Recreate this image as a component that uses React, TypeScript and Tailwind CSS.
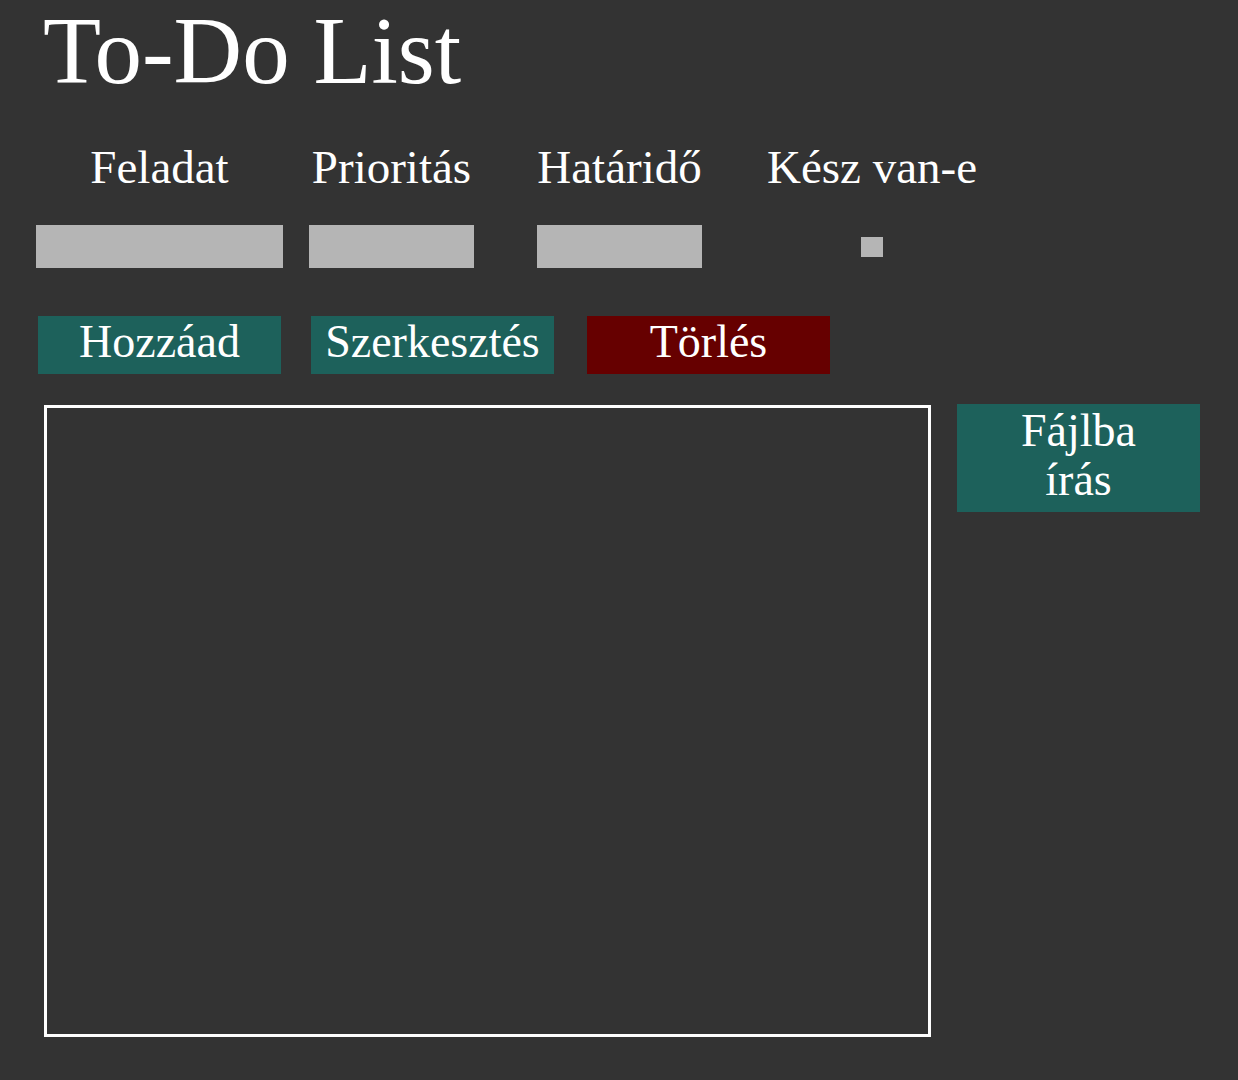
const serif = { fontFamily: '"Liberation Serif", "Times New Roman", serif' };

const columns = [
  { label: "Feladat", width: "w-[247px]", ml: "ml-[36px]" },
  { label: "Prioritás", width: "w-[165px]", ml: "ml-[26px]" },
  { label: "Határidő", width: "w-[165px]", ml: "ml-[63px]" },
  { label: "Kész van-e", width: "w-[198px]", ml: "ml-[71px]" },
];

export default function App() {
  return (
    <div className="min-h-[1080px] w-full bg-[#333333] text-white" style={serif}>
      <h1 className="pl-[43px] pt-[1px] text-[95px] leading-[100px] font-normal">To-Do List</h1>

      {/* labels */}
      <div className="mt-[41px] flex">
        {columns.map((c) => (
          <div
            key={c.label}
            className={`${c.ml} ${c.width} flex justify-center text-[47px] leading-[50px] whitespace-nowrap`}
          >
            {c.label}
          </div>
        ))}
      </div>

      {/* inputs */}
      <div className="mt-[33px] flex h-[43px] items-center">
        <input className="ml-[36px] h-[43px] w-[247px] bg-[#b5b5b5] outline-none" />
        <input className="ml-[26px] h-[43px] w-[165px] bg-[#b5b5b5] outline-none" />
        <input className="ml-[63px] h-[43px] w-[165px] bg-[#b5b5b5] outline-none" />
        <div className="ml-[71px] flex w-[198px] justify-center">
          <div className="h-[20px] w-[22px] bg-[#b5b5b5]" />
        </div>
      </div>

      {/* actions */}
      <div className="mt-[48px] flex">
        <button className="ml-[38px] flex h-[58px] w-[243px] items-center justify-center bg-[#1d615b] pb-[6px] text-[46px] leading-[50px]">
          Hozzáad
        </button>
        <button className="ml-[30px] flex h-[58px] w-[243px] items-center justify-center bg-[#1d615b] pb-[6px] text-[46px] leading-[50px]">
          Szerkesztés
        </button>
        <button className="ml-[33px] flex h-[58px] w-[243px] items-center justify-center bg-[#660000] pb-[6px] text-[46px] leading-[50px]">
          Törlés
        </button>
      </div>

      <div className="mt-[30px] flex items-start">
        <div className="ml-[44px] mt-[1px] h-[632px] w-[887px] border-[3px] border-white" />
        <div className="ml-[26px] h-[108px] w-[243px] bg-[#1d615b] pt-[2px] text-center text-[46px] leading-[49px]">
          Fájlba
          <br />
          írás
        </div>
      </div>
    </div>
  );
}
